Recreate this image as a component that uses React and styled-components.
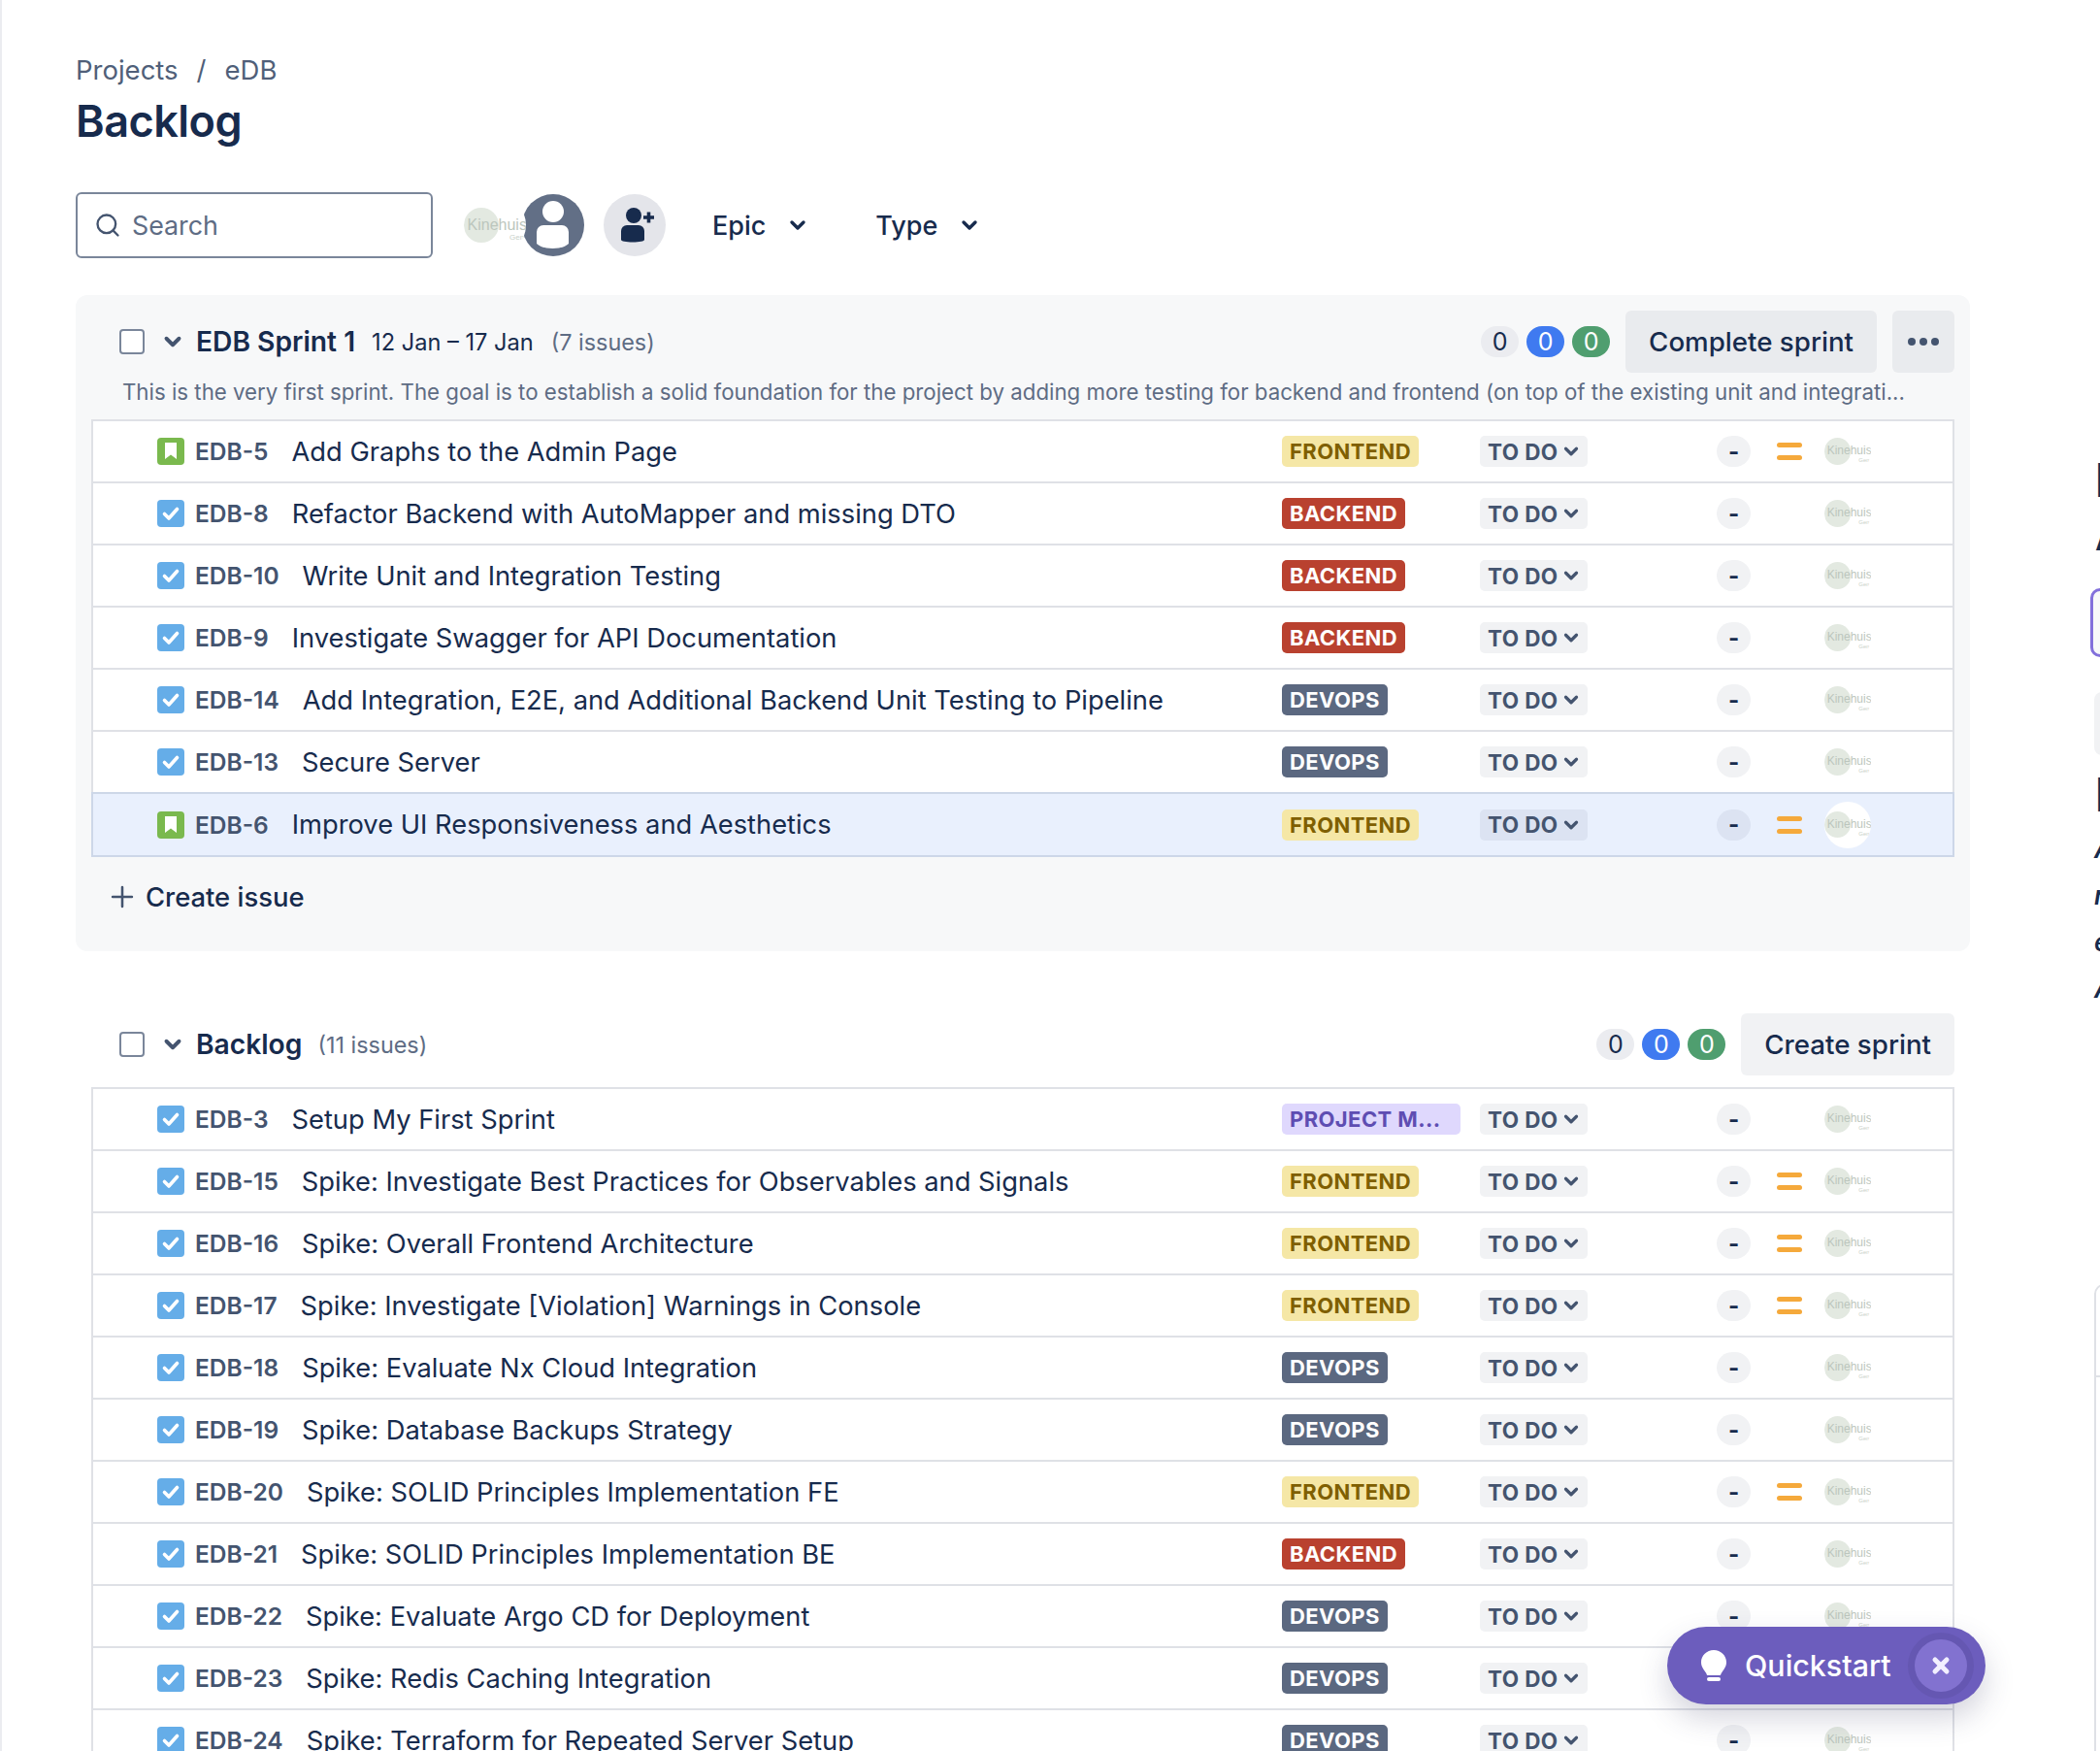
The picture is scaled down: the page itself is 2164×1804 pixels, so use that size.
import React from "react";
import styled, { createGlobalStyle } from "styled-components";
import { Search, ChevronDown, Plus, X } from "lucide-react";

const Global = createGlobalStyle`
  html, body { margin: 0; padding: 0; background: #fff; }
  body { font-family: Inter, "Liberation Sans", sans-serif; color: #172b4d; }
`;

const Page = styled.div`
  position: relative;
  display: flex;
  align-items: flex-start;
  width: 2164px;
  height: 1804px;
  overflow: hidden;
  box-sizing: border-box;
  padding: 52px 0 0 76px;
  border-left: 2px solid #ebecf0;
`;
const Main = styled.main`
  flex: none;
  width: 2076px;
`;
const Crumbs = styled.div`
  display: flex;
  gap: 19px;
  font-size: 27.5px;
  line-height: 41px;
  color: #505f79;
`;
const Title = styled.h1`
  margin: 4px 0 0;
  font-size: 45px;
  line-height: 56px;
  font-weight: 600;
  letter-spacing: -0.5px;
  color: #172b4d;
`;
const Filters = styled.div`
  display: flex;
  align-items: center;
  margin-top: 45px;
  height: 68px;
`;
const SearchBox = styled.div`
  box-sizing: border-box;
  width: 368px;
  height: 68px;
  border: 2px solid #7a869a;
  border-radius: 6px;
  display: flex;
  align-items: center;
  gap: 11px;
  padding-left: 17px;
  font-size: 26.8px;
  color: #5e6c84;
`;
const Logo = styled.span`
  position: relative;
  z-index: 1;
  display: block;
  flex: none;
  width: ${(p) => p.$box}px;
  height: ${(p) => p.$box}px;
  border-radius: 50%;
  overflow: hidden;
  background: #fff;
  &::before {
    content: "";
    position: absolute;
    left: 0;
    top: ${(p) => p.$box * 0.215}px;
    width: ${(p) => p.$box * 0.57}px;
    height: ${(p) => p.$box * 0.57}px;
    border-radius: 50%;
    background: #e3e9e1;
  }
`;
const LogoText = styled.span`
  position: absolute;
  left: ${(p) => p.$box * 0.055}px;
  top: ${(p) => p.$box * 0.34}px;
  font-family: "Liberation Sans", sans-serif;
  font-size: ${(p) => p.$box * 0.25}px;
  line-height: 1.2;
  color: #bcc6bd;
  white-space: nowrap;
`;
const LogoSub = styled.span`
  position: absolute;
  right: ${(p) => p.$box * 0.03}px;
  top: ${(p) => p.$box * 0.63}px;
  font-family: "Liberation Sans", sans-serif;
  font-size: ${(p) => p.$box * 0.125}px;
  color: #c9d1ca;
`;
const Avatars = styled.div`
  display: flex;
  align-items: center;
  margin-left: 32px;
`;
const UserAvatar = styled.svg`
  width: 64px;
  height: 64px;
  flex: none;
  margin-left: -4px;
  margin-right: 20px;
`;
const AddUser = styled.svg`
  width: 64px;
  height: 64px;
  flex: none;
`;
const FilterButton = styled.div`
  display: flex;
  align-items: center;
  gap: 21px;
  font-size: 27px;
  font-weight: 500;
  color: #172b4d;
  margin-left: ${(p) => p.$ml}px;
`;
const Sprint = styled.section`
  box-sizing: border-box;
  width: 1952px;
  margin-top: 38px;
  padding: 16px 16px 0;
  height: 676px;
  background: #f7f8f9;
  border-radius: 12px;
`;
const SectionHead = styled.div`
  display: flex;
  align-items: center;
  height: 64px;
  padding-left: 29px;
`;
const Check = styled.span`
  box-sizing: border-box;
  width: 26px;
  height: 26px;
  background: #fff;
  border: 2px solid #7a869a;
  border-radius: 4px;
  flex: none;
`;
const Caret = styled(ChevronDown)`
  flex: none;
  margin-left: 16px;
  color: #44546f;
`;
const Name = styled.span`
  font-size: 28.2px;
  font-weight: 600;
  color: #172b4d;
  margin-left: 11px;
`;
const Dates = styled.span`
  font-size: 23.6px;
  color: #172b4d;
  margin-left: 17px;
`;
const Count = styled.span`
  font-size: 23.4px;
  color: #5e6c84;
  margin-left: ${(p) => p.$ml}px;
`;
const Right = styled.div`
  margin-left: auto;
  display: flex;
  align-items: center;
`;
const Pill = styled.span`
  width: 39px;
  height: 32px;
  margin-right: 8px;
  border-radius: 16px;
  display: flex;
  align-items: center;
  justify-content: center;
  font-size: 25px;
  background: ${(p) => p.$bg};
  color: ${(p) => p.$fg};
`;
const HeadButton = styled.div`
  height: 64px;
  padding: 0 24px;
  margin-left: 8px;
  display: flex;
  align-items: center;
  border-radius: 6px;
  background: ${(p) => p.$bg};
  font-size: 27.7px;
  font-weight: 500;
  color: #172b4d;
`;
const MoreButton = styled.div`
  width: 64px;
  height: 64px;
  margin-left: 16px;
  border-radius: 6px;
  background: #e9ebee;
  display: flex;
  align-items: center;
  justify-content: center;
  gap: 4px;
`;
const Dot = styled.i`
  width: 8px;
  height: 8px;
  border-radius: 50%;
  background: #44546f;
`;
const Goal = styled.div`
  font-size: 22.27px;
  line-height: 32px;
  color: #5e6c84;
  margin: 4px 0 12px 32px;
  white-space: nowrap;
`;
const List = styled.div`
  box-sizing: border-box;
  width: 1920px;
  border-top: 2px solid #dfe1e6;
  border-left: 2px solid #dfe1e6;
  border-right: 2px solid #dfe1e6;
  margin-top: ${(p) => p.$mt || 0}px;
`;
const Row = styled.div`
  box-sizing: border-box;
  height: 64px;
  display: flex;
  align-items: center;
  border-bottom: 2px solid #dfe1e6;
  background: #fff;
  padding-left: 66px;
  ${(p) =>
    p.$active &&
    `
    height: 67px;
    margin-top: -2px;
    border-top: 2px solid #cdd7e8;
    border-bottom-color: #cdd7e8;
    background: #e9f0fd;
    box-shadow: -2px 0 0 #cdd7e8, 2px 0 0 #cdd7e8;
  `}
`;
const IssueIcon = styled.svg`
  width: 28px;
  height: 28px;
  flex: none;
`;
const Key = styled.span`
  font-size: 24.5px;
  font-weight: 600;
  color: #44546f;
  margin-left: 11px;
  margin-right: 24px;
  flex: none;
`;
const Summary = styled.span`
  font-size: 27.3px;
  color: #172b4d;
  flex: 1;
  min-width: 0;
  white-space: nowrap;
`;
const Meta = styled.div`
  flex: none;
  width: 691px;
  display: grid;
  grid-template-columns: 204px 244px 62px 49px 48px;
  align-items: center;
`;
const Lozenge = styled.span`
  justify-self: start;
  box-sizing: border-box;
  height: 32px;
  width: ${(p) => p.$w || "auto"};
  padding: 0 8px;
  border-radius: 5px;
  display: flex;
  align-items: center;
  font-size: 22px;
  font-weight: 700;
  letter-spacing: 0.4px;
  white-space: nowrap;
  background: ${(p) => p.$bg};
  color: ${(p) => p.$fg};
`;
const Status = styled.span`
  justify-self: start;
  height: 32px;
  padding: 0 6px 0 8px;
  border-radius: 5px;
  background: rgba(9, 30, 66, 0.06);
  display: flex;
  align-items: center;
  gap: 2px;
  font-size: 22.5px;
  font-weight: 700;
  letter-spacing: 0.4px;
  color: #44546f;
`;
const Estimate = styled.span`
  width: 35px;
  height: 32px;
  border-radius: 16px;
  background: rgba(9, 30, 66, 0.06);
  display: flex;
  align-items: center;
  justify-content: center;
  font-size: 24px;
  font-weight: 700;
  color: #172b4d;
`;
const Priority = styled.svg`
  width: 26px;
  height: 28px;
`;
const CreateRow = styled.div`
  display: flex;
  align-items: center;
  gap: 7px;
  margin: 24px 0 0 15px;
  font-size: 27.4px;
  font-weight: 500;
  color: #172b4d;
`;
const BacklogBox = styled.section`
  box-sizing: border-box;
  width: 1952px;
  margin-top: 64px;
  padding: 0 16px;
`;
const Quick = styled.div`
  position: absolute;
  z-index: 5;
  left: 1716px;
  top: 1676px;
  width: 328px;
  height: 80px;
  border-radius: 40px;
  background: #6c5dbd;
  box-shadow: 0 14px 30px rgba(60, 60, 100, 0.22);
  display: flex;
  align-items: center;
  color: #fff;
  font-size: 30.4px;
  font-weight: 500;
  box-sizing: border-box;
  padding-left: 35px;
`;
const Bulb = styled.svg`
  width: 26px;
  height: 32px;
  flex: none;
`;
const QuickText = styled.span`
  margin-left: 19px;
`;
const QuickClose = styled.span`
  position: absolute;
  right: 19px;
  top: 13px;
  width: 54px;
  height: 54px;
  border-radius: 50%;
  background: #8272d0;
  box-shadow: 0 0 0 7px #6557b2;
  display: flex;
  align-items: center;
  justify-content: center;
`;
const Side = styled.aside`
  flex: none;
  width: 220px;
  padding-top: 413px;
  display: flex;
  flex-direction: column;
  color: #172b4d;
  white-space: nowrap;
`;
const SideHeading = styled.div`
  padding-left: 5px;
  font-size: ${(p) => p.$size}px;
  line-height: ${(p) => p.$lh}px;
  font-weight: 700;
  margin-top: ${(p) => p.$mt || 0}px;
`;
const SideInput = styled.div`
  box-sizing: border-box;
  height: 71px;
  margin-top: 23px;
  border: 3px solid #8270db;
  border-radius: 10px;
  background: #f7f8f9;
`;
const SideButton = styled.div`
  height: 65px;
  margin: 36px 0 0 4px;
  border-radius: 8px;
  background: #f1f2f4;
`;
const SideLines = styled.div`
  margin-top: 2px;
  padding-left: 4px;
  font-size: 26px;
  line-height: 48px;
  font-weight: 600;
  font-style: italic;
`;
const SideBox = styled.div`
  box-sizing: border-box;
  height: 520px;
  margin: 280px 0 0 4px;
  border: 2px solid #dfe1e6;
  border-radius: 10px;
`;
const SideBoxHead = styled.div`
  height: 92px;
  border-bottom: 2px solid #dfe1e6;
`;

const FE = { label: "FRONTEND", bg: "#f5e7a6", fg: "#7f5f01" };
const BE = { label: "BACKEND", bg: "#b9412f", fg: "#fff" };
const DO = { label: "DEVOPS", bg: "#5b6880", fg: "#fff" };
const PM = { label: "PROJECT M...", bg: "#dfd8fd", fg: "#5e4db2", w: "184px" };

const sprintIssues = [
  { id: "EDB-5", text: "Add Graphs to the Admin Page", epic: FE, story: true, med: true },
  { id: "EDB-8", text: "Refactor Backend with AutoMapper and missing DTO", epic: BE },
  { id: "EDB-10", text: "Write Unit and Integration Testing", epic: BE },
  { id: "EDB-9", text: "Investigate Swagger for API Documentation", epic: BE },
  { id: "EDB-14", text: "Add Integration, E2E, and Additional Backend Unit Testing to Pipeline", epic: DO },
  { id: "EDB-13", text: "Secure Server", epic: DO },
  { id: "EDB-6", text: "Improve UI Responsiveness and Aesthetics", epic: FE, story: true, med: true, active: true },
];

const backlogIssues = [
  { id: "EDB-3", text: "Setup My First Sprint", epic: PM },
  { id: "EDB-15", text: "Spike: Investigate Best Practices for Observables and Signals", epic: FE, med: true },
  { id: "EDB-16", text: "Spike: Overall Frontend Architecture", epic: FE, med: true },
  { id: "EDB-17", text: "Spike: Investigate [Violation] Warnings in Console", epic: FE, med: true },
  { id: "EDB-18", text: "Spike: Evaluate Nx Cloud Integration", epic: DO },
  { id: "EDB-19", text: "Spike: Database Backups Strategy", epic: DO },
  { id: "EDB-20", text: "Spike: SOLID Principles Implementation FE", epic: FE, med: true },
  { id: "EDB-21", text: "Spike: SOLID Principles Implementation BE", epic: BE },
  { id: "EDB-22", text: "Spike: Evaluate Argo CD for Deployment", epic: DO },
  { id: "EDB-23", text: "Spike: Redis Caching Integration", epic: DO },
  { id: "EDB-24", text: "Spike: Terraform for Repeated Server Setup", epic: DO },
];

function StoryIcon() {
  return (
    <IssueIcon viewBox="0 0 28 28">
      <rect width="28" height="28" rx="4" fill="#7ab94e" />
      <path d="M8 5h12v17l-6-4.5-6 4.5z" fill="#fff" />
    </IssueIcon>
  );
}

function TaskIcon() {
  return (
    <IssueIcon viewBox="0 0 28 28">
      <rect width="28" height="28" rx="4" fill="#65ade8" />
      <path d="M7.5 14.5l4.5 4.5 8.5-9.5" fill="none" stroke="#fff" strokeWidth="3.6" strokeLinecap="round" strokeLinejoin="round" />
    </IssueIcon>
  );
}

function Kinehuis({ box }) {
  return (
    <Logo $box={box}>
      <LogoText $box={box}>Kinehuis</LogoText>
      <LogoSub $box={box}>Gen</LogoSub>
    </Logo>
  );
}

function Issue({ issue }) {
  const e = issue.epic;
  return (
    <Row $active={issue.active}>
      {issue.story ? <StoryIcon /> : <TaskIcon />}
      <Key>{issue.id}</Key>
      <Summary>{issue.text}</Summary>
      <Meta>
        <Lozenge $bg={e.bg} $fg={e.fg} $w={e.w}>{e.label}</Lozenge>
        <Status>
          TO DO
          <ChevronDown size={22} strokeWidth={3.5} />
        </Status>
        <Estimate>-</Estimate>
        {issue.med ? (
          <Priority viewBox="0 0 26 28">
            <rect x="0" y="5" width="26" height="5" rx="2.5" fill="#f5a93b" />
            <rect x="0" y="18" width="26" height="5" rx="2.5" fill="#f5a93b" />
          </Priority>
        ) : (
          <span />
        )}
        <Kinehuis box={48} />
      </Meta>
    </Row>
  );
}

function Counts() {
  return (
    <>
      <Pill $bg="#ebecf0" $fg="#172b4d">0</Pill>
      <Pill $bg="#3f7af0" $fg="#fff">0</Pill>
      <Pill $bg="#4f9e6f" $fg="#fff">0</Pill>
    </>
  );
}

export default function App() {
  return (
    <Page>
      <Global />
      <Main>
        <Crumbs>
          <span>Projects</span>
          <span>/</span>
          <span>eDB</span>
        </Crumbs>
        <Title>Backlog</Title>
        <Filters>
          <SearchBox>
            <Search size={28} strokeWidth={2} color="#44546f" />
            Search
          </SearchBox>
          <Avatars>
            <Kinehuis box={64} />
            <UserAvatar viewBox="0 0 64 64">
              <circle cx="32" cy="32" r="32" fill="#626f86" />
              <circle cx="32" cy="18" r="11" fill="#fff" />
              <path d="M15 39a7 7 0 0 1 7-7h19a7 7 0 0 1 7 7v12c-3 3-9 5-16.5 5s-13.5-2-16.5-5z" fill="#fff" />
            </UserAvatar>
            <AddUser viewBox="0 0 64 64">
              <circle cx="32" cy="32" r="32" fill="#e4e5ea" />
              <circle cx="31" cy="22" r="8" fill="#172b4d" />
              <path d="M18 38a6 6 0 0 1 6-6h12a6 6 0 0 1 6 6v9c0 1.5-5 2.5-12 2.5s-12-1-12-2.5z" fill="#172b4d" />
              <path d="M41 24h11M46.5 18.5v11" stroke="#172b4d" strokeWidth="3.6" />
            </AddUser>
          </Avatars>
          <FilterButton $ml={48}>
            Epic
            <ChevronDown size={24} strokeWidth={3.4} />
          </FilterButton>
          <FilterButton $ml={68}>
            Type
            <ChevronDown size={24} strokeWidth={3.4} />
          </FilterButton>
        </Filters>
        <Sprint>
          <SectionHead>
            <Check />
            <Caret size={26} strokeWidth={3.6} />
            <Name>EDB Sprint 1</Name>
            <Dates>12 Jan – 17 Jan</Dates>
            <Count $ml={18}>(7 issues)</Count>
            <Right>
              <Counts />
              <HeadButton $bg="#e9ebee">Complete sprint</HeadButton>
              <MoreButton>
                <Dot />
                <Dot />
                <Dot />
              </MoreButton>
            </Right>
          </SectionHead>
          <Goal>
            This is the very first sprint. The goal is to establish a solid foundation for the project by adding more testing for backend and frontend (on top of the existing unit and integrati...
          </Goal>
          <List>
            {sprintIssues.map((i) => (
              <Issue key={i.id} issue={i} />
            ))}
          </List>
          <CreateRow>
            <Plus size={34} strokeWidth={1.8} color="#44546f" />
            Create issue
          </CreateRow>
        </Sprint>
        <BacklogBox>
          <SectionHead>
            <Check />
            <Caret size={26} strokeWidth={3.6} />
            <Name>Backlog</Name>
            <Count $ml={16}>(11 issues)</Count>
            <Right>
              <Counts />
              <HeadButton $bg="#f1f2f4">Create sprint</HeadButton>
            </Right>
          </SectionHead>
          <List $mt={12}>
            {backlogIssues.map((i) => (
              <Issue key={i.id} issue={i} />
            ))}
          </List>
        </BacklogBox>
      </Main>
      <Side>
        <SideHeading $size={48} $lh={60}>Improve</SideHeading>
        <SideHeading $size={36} $lh={58}>Add</SideHeading>
        <SideInput />
        <SideButton />
        <SideHeading $size={48} $lh={60} $mt={11}>Details</SideHeading>
        <SideLines>
          <div>A</div>
          <div>r</div>
          <div>e</div>
          <div>A</div>
        </SideLines>
        <SideBox>
          <SideBoxHead />
        </SideBox>
      </Side>
      <Quick>
        <Bulb viewBox="0 0 26 32">
          <path d="M13 0C5.8 0 0 5.6 0 12.5c0 4.6 2.6 7.6 4.6 10.4.9 1.2 1.2 2.1 1.4 3.1h14c.2-1 .5-1.900 1.4-3.100C23.400 20.100 26 17.100 26 12.500 26 5.600 20.200 0 13 0z" fill="#fff" />
          <rect x="6" y="28" width="14" height="4" rx="2" fill="#fff" />
        </Bulb>
        <QuickText>Quickstart</QuickText>
        <QuickClose>
          <X size={24} strokeWidth={5} color="#f2efff" />
        </QuickClose>
      </Quick>
    </Page>
  );
}
